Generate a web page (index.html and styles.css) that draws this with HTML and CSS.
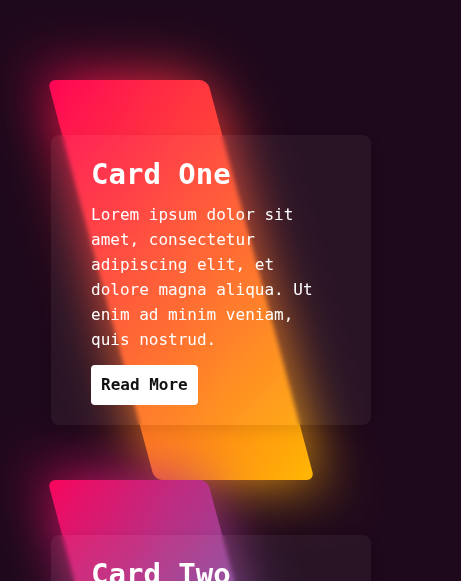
FILE: index.html
```html
<!DOCTYPE html>
<html lang="en">
<head>
<meta charset="utf-8">
<title>Cards</title>
<link rel="stylesheet" href="styles.css">
</head>
<body>
<div class="container">
  <div class="box box-one">
    <div class="content">
      <h2>Card One</h2>
      <p>Lorem ipsum dolor sit amet, consectetur adipiscing elit, et dolore magna aliqua. Ut enim ad minim veniam, quis nostrud.</p>
      <a href="#" class="btn">Read More</a>
    </div>
  </div>
  <div class="box box-two">
    <div class="content">
      <h2>Card Two</h2>
      <p>Lorem ipsum dolor sit amet, consectetur adipiscing elit, et dolore magna aliqua. Ut enim ad minim veniam, quis nostrud.</p>
      <a href="#" class="btn">Read More</a>
    </div>
  </div>
</div>
</body>
</html>
```

FILE: styles.css
```css
* {
  box-sizing: border-box;
}

html, body {
  margin: 0;
  padding: 0;
}

body {
  background: #1e081b;
  font-family: "DejaVu Sans Mono", monospace;
  color: #fff;
  overflow: hidden;
}

.container {
  display: flex;
  flex-direction: column;
  padding: 80px 0 0 51px;
}

.box {
  position: relative;
  width: 320px;
  height: 400px;
  display: flex;
  align-items: center;
  flex-shrink: 0;
}

.box::before,
.box::after {
  content: "";
  position: absolute;
  top: 0;
  left: 50px;
  width: 160px;
  height: 100%;
  border-radius: 8px;
  transform: skewX(15deg);
}

.box::after {
  filter: blur(30px);
}

.box-one::before,
.box-one::after {
  background: linear-gradient(315deg, #ffbc00, #ff0058);
}

.box-two::before,
.box-two::after {
  background: linear-gradient(315deg, #03a9f4, #ff0058);
}

.content {
  position: relative;
  z-index: 1;
  width: 320px;
  padding: 20px 40px;
  background: rgba(255, 255, 255, 0.05);
  backdrop-filter: blur(2px);
  border-radius: 8px;
  box-shadow: 0 5px 15px rgba(0, 0, 0, 0.1);
  display: flex;
  flex-direction: column;
  align-items: flex-start;
}

.content h2 {
  margin: 0 0 9px;
  font-size: 29px;
  line-height: 38px;
  font-weight: 700;
  color: #fff;
}

.content p {
  margin: 0;
  font-size: 16px;
  line-height: 25px;
  color: #fff;
}

.btn {
  margin-top: 13px;
  display: inline-block;
  padding: 10px;
  font-size: 16px;
  line-height: 20px;
  font-weight: 700;
  color: #111;
  background: #fff;
  border-radius: 4px;
  text-decoration: none;
}
```
